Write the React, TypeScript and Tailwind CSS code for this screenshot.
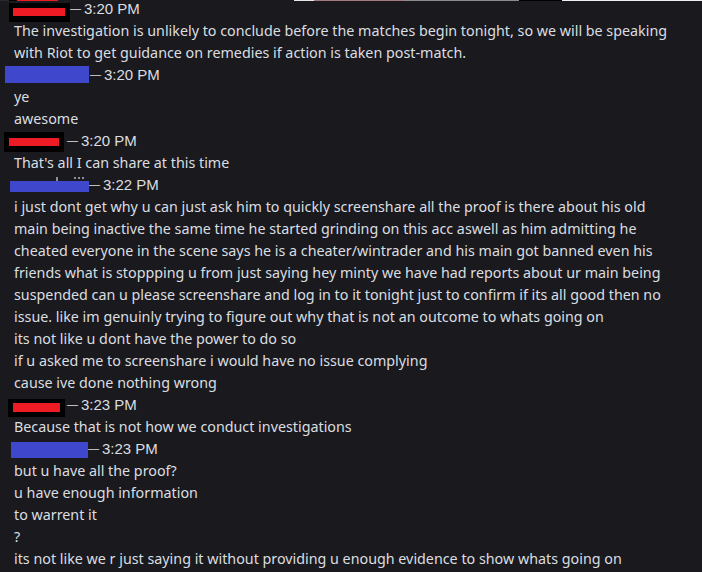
const body = "font-['Noto_Sans',sans-serif] text-[14.3px] leading-[22px] text-[#dbdee1]";

function Lines({ items }: { items: string[] }) {
    return (
        <>
            {items.map((t, i) => (
                <div key={i} className={`h-[22px] pl-[14px] whitespace-nowrap ${body}`}>
                    <span className="relative top-[1px]">{t}</span>
                </div>
            ))}
        </>
    );
}

function Stamp({ time, gap = "ml-[2px]" }: { time: string; gap?: string }) {
    return (
        <div className="flex h-[22px] items-center font-['Liberation_Sans',Arial,sans-serif] text-[#dcdde0]">
            <span className={`${gap} text-[11px] leading-none`}>—</span>
            <span className="ml-[3px] text-[15px] leading-none">{time}</span>
        </div>
    );
}

export default function App() {
    return (
        <div className="relative h-[572px] w-[702px] overflow-hidden bg-[#1a1a1e]">
            {/* top edge of the cropped screenshot */}
            <div className="absolute left-0 top-0 flex h-[1px] w-full">
                <div className="w-[9px] bg-[#2a2a2e]" />
                <div className="w-[8px] bg-black" />
                <div className="w-[41px] bg-[#ed1c24]" />
                <div className="w-[236px] bg-[#1a1a1e]" />
                <div className="w-[20px] bg-[#e6e6e6]" />
                <div className="w-[89px] bg-[#a3797e]" />
                <div className="w-[116px] bg-[#8c8c8c]" />
                <div className="w-[43px] bg-black" />
                <div className="flex-1 bg-[#eeeeee]" />
            </div>

            <div className="mt-[-3px] flex flex-col">
                {/* 1 */}
                <div className="flex h-[22px]">
                    <div className="ml-[9px] mt-[6px] h-[19px] w-[61px] shrink-0 bg-black pl-[4px] pt-[5px]">
                        <div className="h-[8px] w-[52px] bg-[#ed1c24]" />
                    </div>
                    <Stamp time="3:20 PM" gap="ml-[0px]" />
                </div>
                <Lines
                    items={[
                        "The investigation is unlikely to conclude before the matches begin tonight, so we will be speaking",
                        "with Riot to get guidance on remedies if action is taken post-match.",
                    ]}
                />

                {/* 2 */}
                <div className="flex h-[22px]">
                    <div className="ml-[5px] mt-[3px] h-[17px] w-[84px] shrink-0 bg-[#3f48cc]" />
                    <Stamp time="3:20 PM" gap="ml-[1px]" />
                </div>
                <Lines items={["ye", "awesome"]} />

                {/* 3 */}
                <div className="flex h-[22px]">
                    <div className="ml-[4px] mt-[3px] h-[20px] w-[60px] shrink-0 bg-black pl-[5px] pt-[6px]">
                        <div className="h-[8px] w-[50px] bg-[#ed1c24]" />
                    </div>
                    <Stamp time="3:20 PM" gap="ml-[3px]" />
                </div>
                <Lines items={["That's all I can share at this time"]} />

                {/* 4 */}
                <div className="relative flex h-[22px]">
                    <div className="absolute left-[56px] top-[4px] h-[4px] w-[2px] bg-[#8e9096]" />
                    <div className="absolute left-[74px] top-[4px] h-[2px] w-[2px] bg-[#8e9096]" />
                    <div className="absolute left-[78px] top-[4px] h-[2px] w-[2px] bg-[#8e9096]" />
                    <div className="absolute left-[82px] top-[4px] h-[2px] w-[2px] bg-[#8e9096]" />
                    <div className="ml-[10px] mt-[8px] h-[11px] w-[79px] shrink-0 bg-[#3f48cc]" />
                    <Stamp time="3:22 PM" gap="ml-[0px]" />
                </div>
                <Lines
                    items={[
                        "i just dont get why u can just ask him to quickly screenshare all the proof is there about his old",
                        "main being inactive the same time he started grinding on this acc aswell as him admitting he",
                        "cheated everyone in the scene says he is a cheater/wintrader and his main got banned even his",
                        "friends what is stoppping u from just saying hey minty we have had reports about ur main being",
                        "suspended can u please screenshare and log in to it tonight just to confirm if its all good then no",
                        "issue. like im genuinly trying to figure out why that is not an outcome to whats going on",
                        "its not like u dont have the power to do so",
                        "if u asked me to screenshare i would have no issue complying",
                        "cause ive done nothing wrong",
                    ]}
                />

                {/* 5 */}
                <div className="flex h-[22px]">
                    <div className="ml-[8px] mt-[6px] h-[18px] w-[57px] shrink-0 bg-black pl-[5px] pt-[4px]">
                        <div className="h-[9px] w-[47px] bg-[#ed1c24]" />
                    </div>
                    <Stamp time="3:23 PM" gap="ml-[2px]" />
                </div>
                <Lines items={["Because that is not how we conduct investigations"]} />

                {/* 6 */}
                <div className="flex h-[22px]">
                    <div className="ml-[11px] mt-[5px] h-[16px] w-[77px] shrink-0 bg-[#3f48cc]" />
                    <Stamp time="3:23 PM" gap="ml-[0px]" />
                </div>
                <Lines
                    items={[
                        "but u have all the proof?",
                        "u have enough information",
                        "to warrent it",
                        "?",
                        "its not like we r just saying it without providing u enough evidence to show whats going on",
                    ]}
                />
            </div>
        </div>
    );
}
